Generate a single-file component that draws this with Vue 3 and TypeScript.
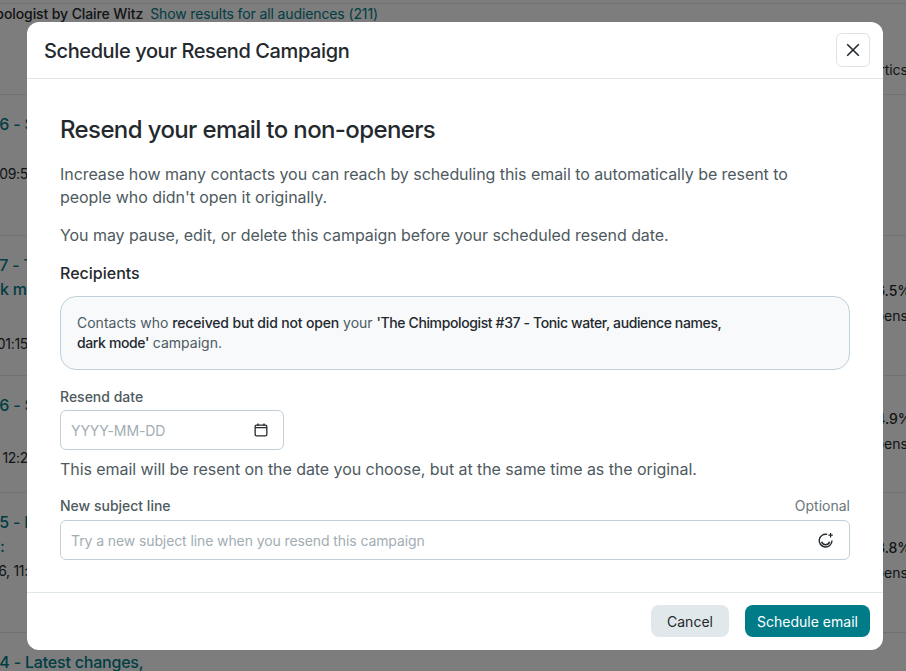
<script setup lang="ts">
interface Row {
  height: number
  title: string[]
  date: string
  dateGap: number
  rate?: string
}

// campaign rows behind the dialog, only their edges stay visible
const rows: Row[] = [
  { height: 141, title: ['The Chimpologist #36 - S'], date: 'Sent Tue, Feb 2, 09:5', dateGap: 28 },
  { height: 140, title: ['The Chimpologist #37 - T', 'audience names, dark m'], date: 'Sent Tue, Feb 9, 01:15', dateGap: 33 },
  { height: 117, title: ['The Chimpologist #36 - S'], date: 'Sent Tue, Feb 2, 12:2', dateGap: 31 },
  { height: 140, title: ['The Chimpologist #35 - L', 'audience names, fun:'], date: 'Sent Tue, Jan 26, 11:', dateGap: 3 },
  { height: 60, title: ['The Chimpologist #34 - Latest changes,'], date: '', dateGap: 0 }
]

rows[1].rate = '46.5%'
rows[2].rate = '44.9%'
rows[3].rate = '43.8%'
</script>

<template>
  <div class="page">
    <div class="filter-bar">
      <span class="filter-name">The Chimpologist by Claire Witz</span>
      <a class="filter-link">Show results for all audiences (211)</a>
    </div>
    <div class="table-head"><span>rtics</span></div>
    <div v-for="(row, i) in rows" :key="i" class="row" :style="{ height: row.height + 'px' }">
      <div class="row-left">
        <div v-for="line in row.title" :key="line" class="row-title">{{ line }}</div>
        <div class="row-date" :style="{ marginTop: row.dateGap + 'px' }">{{ row.date }}</div>
      </div>
      <div v-if="row.rate" class="row-right">
        <div class="rate">{{ row.rate }}</div>
        <div class="rate-label">opens</div>
      </div>
    </div>

    <div class="backdrop">
      <div class="modal">
        <header class="modal-head">
          <h1>Schedule your Resend Campaign</h1>
          <button class="close" aria-label="Close">
            <svg width="14" height="14" viewBox="0 0 14 14">
              <path d="M1.2 1.2 12.8 12.8M12.8 1.2 1.2 12.8" fill="none" stroke="#24292d" stroke-width="1.6" />
            </svg>
          </button>
        </header>

        <div class="modal-body">
          <h2>Resend your email to non-openers</h2>
          <p class="copy first">
            Increase how many contacts you can reach by scheduling this email to automatically be resent to<br />
            people who didn't open it originally.
          </p>
          <p class="copy second">You may pause, edit, or delete this campaign before your scheduled resend date.</p>

          <h3>Recipients</h3>
          <div class="recipients">
            Contacts who <b class="tight">received but did not open</b> your
            <b class="tighter">'The Chimpologist #37 - Tonic water, audience names,<br />dark mode'</b> campaign.
          </div>

          <label class="field-label date-label">Resend date</label>
          <div class="input date-input">
            <span class="placeholder">YYYY-MM-DD</span>
            <svg width="14" height="14" viewBox="0 0 14 14" fill="none" stroke="#24292d" stroke-width="1.3">
              <rect x="1.15" y="2.15" width="11.7" height="10.7" rx="1.4" />
              <path d="M1.15 4.6H12.85M4 .4V3M10 .4V3" />
            </svg>
          </div>
          <p class="copy help">This email will be resent on the date you choose, but at the same time as the original.</p>

          <div class="label-row">
            <label class="field-label">New subject line</label>
            <span class="optional">Optional</span>
          </div>
          <div class="input subject-input">
            <span class="placeholder">Try a new subject line when you resend this campaign</span>
            <svg width="16" height="16" viewBox="0 0 16 16" fill="none" stroke="#24292d" stroke-width="1.4">
              <path d="M9.2 2.4A6.4 6.4 0 1 0 14 8.6" />
              <path d="M3.6 9.8A4.2 4.2 0 0 0 11.6 9.8" stroke-width="1.5" />
              <path d="M12.6 1V5.4M10.4 3.2H14.8" stroke-width="1.2" />
            </svg>
          </div>
        </div>

        <footer class="modal-foot">
          <button class="btn btn-cancel">Cancel</button>
          <button class="btn btn-primary">Schedule email</button>
        </footer>
      </div>
    </div>
  </div>
</template>

<style>
html,
body {
  margin: 0;
  overflow: hidden;
}
</style>

<style scoped>
.page {
  position: relative;
  width: 906px;
  height: 671px;
  overflow: hidden;
  background: #fbfbfb;
  color: #24292d;
  font-family: Inter, 'Liberation Sans', sans-serif;
  font-size: 14px;
}

.filter-bar {
  display: flex;
  gap: 7px;
  height: 24px;
  margin-top: 3px;
  margin-left: -68px;
  box-sizing: border-box;
  line-height: 20px;
  border-top: 1px solid #dfe3e5;
}

.filter-name {
  font-weight: 500;
  letter-spacing: -0.1px;
}

.filter-link {
  color: #007c89;
  letter-spacing: -0.12px;
}

.table-head {
  display: flex;
  justify-content: flex-end;
  height: 68px;
  padding-top: 33px;
  box-sizing: border-box;
  margin-right: -2px;
  line-height: 20px;
  border-bottom: 1px solid #dfe3e5;
}

.row {
  display: flex;
  justify-content: space-between;
  box-sizing: border-box;
  border-bottom: 1px solid #dfe3e5;
  padding-top: 17px;
  overflow: hidden;
}

.row-left {
  width: 184px;
  flex: none;
  margin-left: -156px;
  white-space: nowrap;
}

.row-title {
  font-size: 16px;
  font-weight: 500;
  line-height: 24px;
  letter-spacing: -0.2px;
  color: #007c89;
}

.row-date {
  direction: rtl;
  line-height: 20px;
  letter-spacing: -0.3px;
  unicode-bidi: plaintext;
  text-align: right;
}

.row-right {
  width: 39px;
  flex: none;
  margin-top: -17px;
  padding-bottom: 5px;
  align-self: center;
  white-space: nowrap;
}

.rate {
  font-weight: 500;
  line-height: 20px;
}

.rate-label {
  margin-top: 5px;
  line-height: 20px;
}

.backdrop {
  position: absolute;
  inset: 0;
  background: rgba(0, 0, 0, 0.5);
}

.modal {
  position: absolute;
  left: 27px;
  top: 22px;
  width: 856px;
  height: 628px;
  display: flex;
  flex-direction: column;
  background: #fff;
  border-radius: 12px;
  overflow: hidden;
}

.modal-head {
  display: flex;
  align-items: center;
  justify-content: space-between;
  height: 57px;
  box-sizing: border-box;
  padding: 0 13px 0 17px;
  border-bottom: 1px solid #e1e8ec;
}

h1 {
  margin: 2px 0 0;
  font-size: 20px;
  font-weight: 500;
  line-height: 28px;
  letter-spacing: -0.4px;
}

.close {
  display: flex;
  align-items: center;
  justify-content: center;
  width: 34px;
  height: 34px;
  padding: 0;
  background: #fff;
  border: 1px solid #dbe3e8;
  border-radius: 6px;
}

.modal-body {
  flex: 1;
  padding: 35px 33px 0;
}

h2 {
  margin: 0;
  font-size: 24px;
  font-weight: 500;
  line-height: 32px;
  letter-spacing: -0.62px;
}

.copy {
  margin: 0;
  font-size: 16px;
  line-height: 23px;
  letter-spacing: -0.06px;
  color: #4e5a60;
}

.first {
  margin-top: 17px;
}

.second {
  margin-top: 15px;
}

h3 {
  margin: 14px 0 0;
  font-size: 16px;
  font-weight: 500;
  line-height: 24px;
}

.recipients {
  margin-top: 11px;
  padding: 16px;
  height: 74px;
  box-sizing: border-box;
  background: #f7f9fb;
  border: 1px solid #c1d0d8;
  border-radius: 16px;
  line-height: 20px;
  color: #4e5a60;
}

.recipients b {
  font-weight: 500;
  color: #24292d;
}

.recipients .tight {
  letter-spacing: -0.16px;
}

.recipients .tighter {
  letter-spacing: -0.38px;
}

.field-label {
  display: block;
  font-size: 14px;
  font-weight: 500;
  line-height: 20px;
  color: #4e5a60;
}

.date-label {
  margin-top: 17px;
}

.input {
  display: flex;
  align-items: center;
  justify-content: space-between;
  height: 40px;
  box-sizing: border-box;
  background: #fff;
  border: 1px solid #c1d0d8;
  border-radius: 6px;
  padding: 0 15px 0 10px;
}

.date-input {
  width: 224px;
  margin-top: 3px;
}

.placeholder {
  font-size: 14px;
  letter-spacing: -0.1px;
  color: #a2adb4;
}

.help {
  margin-top: 8px;
}

.label-row {
  display: flex;
  justify-content: space-between;
  margin-top: 15px;
}

.optional {
  font-size: 14px;
  line-height: 20px;
  color: #6b767c;
}

.subject-input {
  margin-top: 4px;
}

.modal-foot {
  display: flex;
  justify-content: flex-end;
  gap: 16px;
  height: 58px;
  box-sizing: border-box;
  padding: 12px 13px 0 0;
  border-top: 1px solid #e1e8ec;
}

.btn {
  height: 32px;
  padding: 0;
  border: 0;
  border-radius: 8px;
  font: inherit;
  font-size: 14px;
}

.btn-cancel {
  width: 78px;
  background: #e1e8ec;
  color: #24292d;
}

.btn-primary {
  width: 125px;
  background: #007c89;
  color: #fff;
}
</style>
